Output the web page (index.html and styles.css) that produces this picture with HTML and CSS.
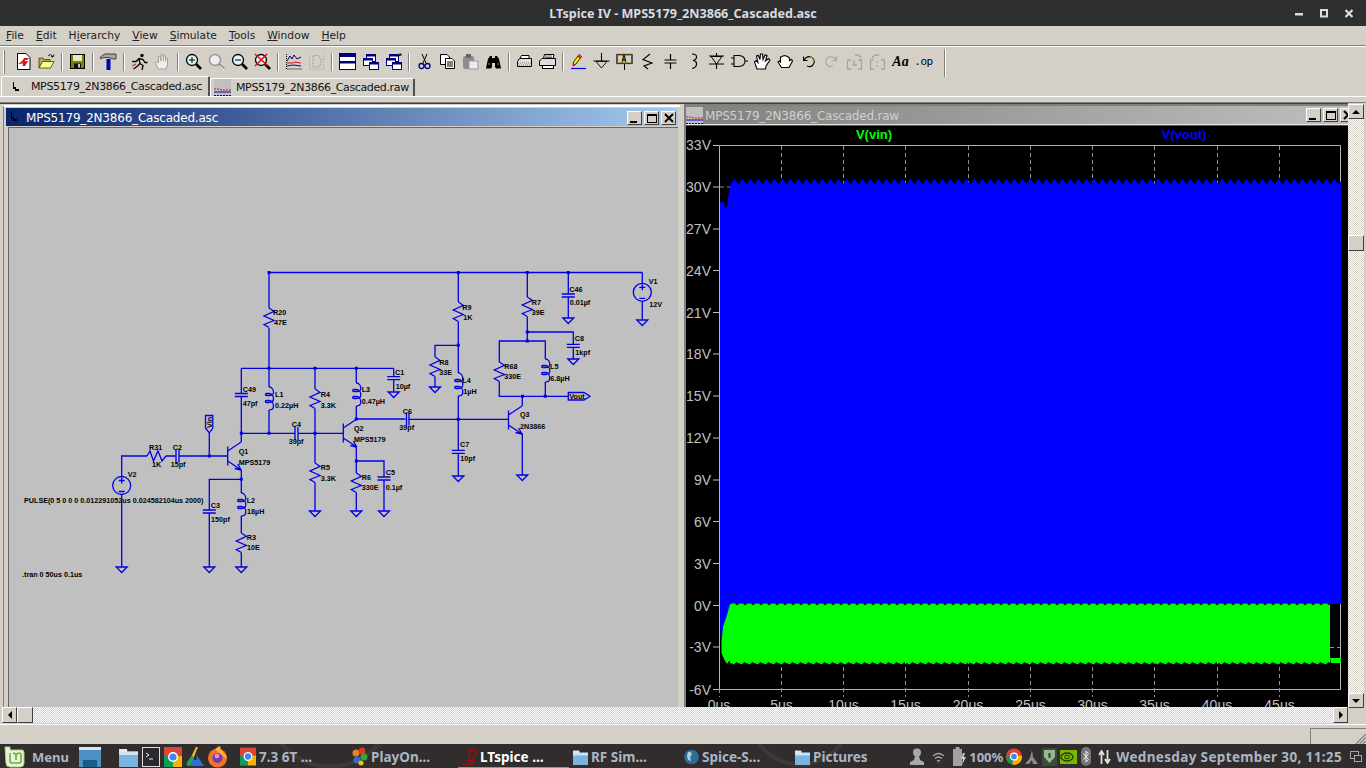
FILE: index.html
```html
<!DOCTYPE html>
<html lang="en">
<head>
<meta charset="utf-8">
<title>LTspice IV</title>
<link rel="stylesheet" href="styles.css">
</head>
<body>
<svg class="defs" width="0" height="0">
<defs>
<symbol id="mag" viewBox="0 0 17 17"><path d="M11 11l5 5" stroke="#000" stroke-width="2.6"/><circle cx="7" cy="7" r="5.5" fill="#dff3f3" stroke="#000" stroke-width="1.3"/></symbol>
<symbol id="magg" viewBox="0 0 17 17"><path d="M11 11l5 5" stroke="#999" stroke-width="2.6"/><circle cx="7" cy="7" r="5.5" fill="#eee" stroke="#999" stroke-width="1.5"/><path d="M12 13l4 4" stroke="#fff"/></symbol>
<symbol id="win2" viewBox="0 0 17 17"><rect x="4.5" y="1.5" width="9" height="7" fill="#fff" stroke="#000080"/><rect x="4.5" y="1.5" width="9" height="2" fill="#000080"/><rect x="1.5" y="5.5" width="9" height="7" fill="#fff" stroke="#000080"/><rect x="1.5" y="5.5" width="9" height="2" fill="#000080"/><rect x="7.5" y="9.5" width="9" height="7" fill="#fff" stroke="#000080"/><rect x="7.5" y="9.5" width="9" height="2" fill="#000080"/></symbol>
<symbol id="q" overflow="visible"><path d="M0-9.5V9.5M0-5L13.5-14M0 5L13.5 14M13.5 14L7 12.5M13.5 14L10 8" fill="none"/></symbol>
<symbol id="gnd" overflow="visible"><path d="M-5.5 0H5.5L0 5.5Z" fill="none"/></symbol>
<symbol id="res" overflow="visible"><path d="M0 0L5 3.3L-5 8L5 12.5L-5 16.5L0 19.5" fill="none"/></symbol>
<symbol id="coil" overflow="visible"><path d="M0 0C3 0 4.5 3 4.5 5.5S3 8.5 0 8.5H-2.5C-4 8.5-4 6.5-2.5 6.5H0C3 6.5 4.5 9 4.5 11.5S3 15.5 0 15.5H-2.5C-4 15.5-4 13.5-2.5 13.5H0C3 13.5 4.5 16.5 4.5 19S3 23 0 23" fill="none"/></symbol>
<symbol id="src" overflow="visible"><circle r="9" fill="none"/><path d="M-3-5H3M0-8V-2M-3 6H3" fill="none"/></symbol>
<symbol id="cap" overflow="visible"><path d="M-6.5 0H6.5M-6.5 3H6.5" fill="none"/></symbol>
<pattern id="tb" width="8" height="9" patternUnits="userSpaceOnUse" x="731" y="178"><path d="M0 6.500L1 4.500L2.500 1.500L3.500 .5L4.500 2.500L5.500 4L7 5L8 6.500V9H0Z" fill="#0000ff"/></pattern>
<pattern id="tg" width="8" height="3" patternUnits="userSpaceOnUse" x="730" y="603"><path d="M0 1.500L2 .5L5 .5L6.500 2L8 1.500V3H0Z" fill="#00ff00"/></pattern>
<pattern id="tgb" width="8" height="5" patternUnits="userSpaceOnUse" x="730" y="661"><path d="M0 0H8V2L6.500 1L3.500 3.500L2 2.500L0 2Z" fill="#00ff00"/></pattern>
</defs>
</svg>

<header class="titlebar">
  <span></span>
  <span class="title-text">LTspice IV - MPS5179_2N3866_Cascaded.asc</span>
  <span class="wm-controls">
    <svg width="8" height="9" viewBox="0 0 8 9"><rect y="4" width="8" height="2.500" fill="#ddd"/></svg>
    <svg width="8" height="9" viewBox="0 0 8 9"><rect x="1" y="1" width="6" height="6.500" fill="none" stroke="#ddd" stroke-width="2"/></svg>
    <svg width="8" height="9" viewBox="0 0 8 9"><path d="M.5 1L7.500 8M7.500 1L.5 8" stroke="#ddd" stroke-width="2.200"/></svg>
  </span>
</header>

<nav class="menubar">
  <span class="mi"><u>F</u>ile</span><span class="mi"><u>E</u>dit</span><span class="mi">H<u>i</u>erarchy</span><span class="mi"><u>V</u>iew</span><span class="mi"><u>S</u>imulate</span><span class="mi"><u>T</u>ools</span><span class="mi"><u>W</u>indow</span><span class="mi"><u>H</u>elp</span>
</nav>

<div class="toolbar">
  <i class="grip"></i>
  <span class="tb"><svg viewBox="0 0 17 17"><path d="M2.500.5H11L15 4.500V16.500H2.500Z" fill="#fff" stroke="#000"/><path d="M3.500 11L8 7L9 5H14L12 7H10L8.500 11H7L8 8.500L6 11Z" fill="#e01010"/><path d="M9 8H13L10 13H7.500Z" fill="#e01010"/></svg></span>
  <span class="tb"><svg viewBox="0 0 17 17"><path d="M1 15V5H5L6 6.500H12V8.500H5L1 15Z" fill="#b8a850" stroke="#404000" stroke-width=".8"/><path d="M1 15L4.500 8.500H16L12.500 15Z" fill="#ffff88" stroke="#404000" stroke-width=".8"/><path d="M10 3Q13 0 15 4M15 4L16 1.500M15 4L13 3.500" fill="none" stroke="#000" stroke-width=".9"/></svg></span>
  <i class="sep"></i>
  <span class="tb"><svg viewBox="0 0 17 17"><rect x="1.500" y="1.500" width="14" height="14" fill="#808000" stroke="#000"/><rect x="4" y="2" width="9" height="6" fill="#e8e8c8"/><rect x="5" y="10.500" width="7" height="5" fill="#111"/><rect x="9" y="11" width="2" height="3.500" fill="#ccc"/></svg></span>
  <i class="sep"></i>
  <span class="tb"><svg viewBox="0 0 17 17"><path d="M0 5Q3 0 9 1H16V6H13.500Q9 4 5 4.500Q2 4.500 1 6Z" fill="#a8a8a8" stroke="#222" stroke-width=".8"/><rect x="6.500" y="6" width="4" height="11" fill="#0000c8"/></svg></span>
  <i class="sep"></i>
  <span class="tb"><svg viewBox="0 0 17 17"><circle cx="11" cy="2.500" r="1.700" fill="#000"/><path d="M1 8.500H5L8 5.500L12 6.500L14 9.500H16.500M8 6L9 10.500L6.500 13L2.500 16M9 10.500L12 12.500L11 17" fill="none" stroke="#000" stroke-width="1.300"/><path d="M5 11L1 13" stroke="#c01010"/></svg></span>
  <span class="tb"><svg viewBox="0 0 17 17"><path d="M4 16L1.500 9.500L3 8.500L4.500 10V3.500L6 3L7 8V1.500L9 1.500L9.500 8V2.500L11.500 3L11.500 8.500V5L13.500 5.500V12L12 16Z" fill="#eee" stroke="#a0a0a0"/></svg></span>
  <i class="sep"></i>
  <span class="tb"><svg viewBox="0 0 17 17"><use href="#mag"/><path d="M4 7H10M7 4V10" stroke="#000"/></svg></span>
  <span class="tb"><svg viewBox="0 0 17 17"><use href="#magg"/></svg></span>
  <span class="tb"><svg viewBox="0 0 17 17"><use href="#mag"/><path d="M4 7H10" stroke="#000"/></svg></span>
  <span class="tb"><svg viewBox="0 0 17 17"><use href="#mag"/><path d="M1 1L14 13M13 1L1 13" stroke="#e01010" stroke-width="1.600"/></svg></span>
  <i class="sep"></i>
  <span class="tb"><svg viewBox="0 0 17 17"><path d="M1.500 1V16H17" fill="none" stroke="#000" stroke-dasharray="1 1"/><path d="M2 8L5 3L7 6L9 2L12 6L16 4" fill="none" stroke="#000080"/><path d="M2 10H8L10 9L16 10" fill="none" stroke="#e01010"/><path d="M2 13L8 12L16 13" fill="none" stroke="#0000d0"/></svg></span>
  <span class="tb"><svg viewBox="0 0 17 17"><path d="M1.500 1V16H17M15.500 1V16" fill="none" stroke="#a8a8a8" stroke-dasharray="1 1"/><path d="M5 2.500H10L13 5.500V11L10 14H5V2.500" fill="none" stroke="#a8a8a8" stroke-dasharray="2 1" stroke-width="1.200"/></svg></span>
  <i class="sep"></i>
  <span class="tb"><svg viewBox="0 0 17 17"><rect x=".5" y=".5" width="16" height="16" fill="#fff" stroke="#000080"/><rect y="1" width="17" height="3" fill="#000080"/><rect y="8" width="17" height="2.500" fill="#000080"/></svg></span>
  <span class="tb"><svg viewBox="0 0 17 17"><use href="#win2"/></svg></span>
  <span class="tb"><svg viewBox="0 0 17 17"><use href="#win2"/><path d="M13 4L16 1M14 1H16V3" fill="none" stroke="#000"/></svg></span>
  <i class="sep"></i>
  <span class="tb"><svg viewBox="0 0 17 17"><path d="M6 1L10 10M11 1L7 10" stroke="#000"/><circle cx="5.500" cy="13" r="2.500" fill="none" stroke="#000080" stroke-width="1.300"/><circle cx="11.500" cy="13" r="2.500" fill="none" stroke="#000080" stroke-width="1.300"/></svg></span>
  <span class="tb"><svg viewBox="0 0 17 17"><path d="M1.500 1.500H8L10.500 4V11.500H1.500Z" fill="#fff" stroke="#000"/><path d="M6.500 5.500H13L15.500 8V15.500H6.500Z" fill="#fff" stroke="#000"/><path d="M8 9H14M8 11H14M8 13H14" stroke="#000"/></svg></span>
  <span class="tb"><svg viewBox="0 0 17 17"><rect x="1" y="3" width="11" height="13" rx="2" fill="#8c8c8c"/><rect x="4" y="1" width="5" height="4" fill="#666"/><rect x="7" y="8" width="9" height="8" fill="#ececec" stroke="#999"/></svg></span>
  <span class="tb"><svg viewBox="0 0 17 17"><path d="M1 15L3 6L5 3H7V14L6 15.500H1ZM16 15L14 6L12 3H10V14L11 15.500H16Z" fill="#000"/><rect x="6.500" y="5" width="4" height="5" fill="#000"/><path d="M3 11H5M12 11H14" stroke="#888"/></svg></span>
  <i class="sep"></i>
  <span class="tb"><svg viewBox="0 0 17 17"><path d="M4 5.500L5.500 2.500H13V5.500" fill="#fff" stroke="#000"/><path d="M1.500 8.500L3.500 5.500H15.500V13.500H1.500Z" fill="#ddd" stroke="#000"/><path d="M2 10H15M3 12H15" stroke="#888" stroke-dasharray="1 1"/></svg></span>
  <span class="tb"><svg viewBox="0 0 17 17"><path d="M4.500 5.500L5.500 1.500H15L14 5.500" fill="#fff" stroke="#000"/><path d="M.5 8L3 5.500H16.500V12.500H.5Z" fill="#ddd" stroke="#000"/><rect x="3.500" y="12.500" width="11" height="3" fill="#fff" stroke="#000"/><path d="M6 3H13M6 4.500H13" stroke="#000" stroke-width=".6"/></svg></span>
  <i class="sep"></i>
  <span class="tb"><svg viewBox="0 0 17 17"><path d="M1 15.500H16" stroke="#0000ff" stroke-width="1.200"/><path d="M3 13L3.500 9L9 1.500L11.500 3.500L6 11Z" fill="#ffe800" stroke="#000" stroke-width=".8"/><path d="M8 3L11 5" stroke="#e01010" stroke-width="1.600"/><path d="M3 13.500L3.500 10L5.500 11.500Z" fill="#e01010"/></svg></span>
  <span class="tb"><svg viewBox="0 0 17 17"><path d="M8.500 0V8M.5 8H16.500" stroke="#000" stroke-width="1.100"/><path d="M3 8.500H14L8.500 15Z" fill="#d4d0c8" stroke="#000" stroke-width=".9"/></svg></span>
  <span class="tb"><svg viewBox="0 0 17 17"><rect x="1" y="1.500" width="15" height="9" fill="#d4d0c8" stroke="#000" stroke-width="1.200"/><path d="M1 2H16M1 10H16" stroke="#808000"/><path d="M8.500 11V17" stroke="#000"/><text x="5.500" y="9" class="ti">A</text></svg></span>
  <span class="tb"><svg viewBox="0 0 17 17"><path d="M11 1L4 6.500L13 10L5 13L9 16" fill="none" stroke="#000" stroke-width="1.100"/></svg></span>
  <span class="tb"><svg viewBox="0 0 17 17"><path d="M8.500 1V7M8.500 10V16M2.500 7H14.500M2.500 10H14.500" stroke="#000" stroke-width="1.200"/></svg></span>
  <span class="tb"><svg viewBox="0 0 17 17"><path d="M7 1Q12 1 11.500 4.500Q11 7 8 7.500Q12 8 11.500 11.500Q11 15 7 15.500" fill="none" stroke="#000" stroke-width="1.200"/></svg></span>
  <span class="tb"><svg viewBox="0 0 17 17"><path d="M8.500 0V16M1 3H16M1 11H16" stroke="#000" stroke-width="1.100"/><path d="M3 3.500H14L8.500 11Z" fill="#d4d0c8" stroke="#000"/></svg></span>
  <span class="tb"><svg viewBox="0 0 17 17"><path d="M3 2.500H8Q14 3 14 8Q14 13 8 13.500H3ZM0 5H3M0 11H3M14 8H17" fill="none" stroke="#000" stroke-width="1.100"/></svg></span>
  <span class="tb"><svg viewBox="0 0 17 17"><path d="M3 16L.5 9L2 7.500L4 9.500L2.500 3L4.500 2.500L6 6.500L6.500 1L8.500 1L9 6.500L11 2L13 2.500L11.500 8L14.500 5.500L16 7L12 13L11.500 16Z" fill="#fff" stroke="#000" stroke-width="1.100"/></svg></span>
  <span class="tb"><svg viewBox="0 0 17 17"><path d="M4.500 14.500L1 9L2.500 8L3.500 9V4L5 3.500L6 3L7.500 2.500L9 3L10.500 3.500L12.500 5V7.500L14.500 6.500L15.500 8L12 14.500Z" fill="#fff" stroke="#000" stroke-width="1.100"/></svg></span>
  <span class="tb"><svg viewBox="0 0 17 17"><path d="M3.500 3.500V7.500H7.500M4 7Q7 2.500 11 4Q15 6 14 10Q12 15 7 13" fill="none" stroke="#000" stroke-width="1.100"/><path d="M10 3.500Q13 4.500 14 8" fill="none" stroke="#c09020"/></svg></span>
  <span class="tb"><svg viewBox="0 0 17 17"><path d="M13.500 3.500V7.500H9.500M13 7Q10 2.500 6 4Q2 6 3 10Q5 15 10 13" fill="none" stroke="#aaa" stroke-width="1.300"/></svg></span>
  <span class="tb"><svg viewBox="0 0 17 17"><path d="M1.500 7H5M1.500 7V16H5M12 7H15.500V16H12M8 7V12M8 12H11M6 12H7M9 2Q13 1 15 5" fill="none" stroke="#a4a4a4" stroke-width="1.300"/></svg></span>
  <span class="tb"><svg viewBox="0 0 17 17"><path d="M1.500 7H5M1.500 7V16H5M12 7H15.500V16H12M8 8V10M8 12V14M3 5Q5 1 10 2" fill="none" stroke="#a4a4a4" stroke-width="1.300"/></svg></span>
  <span class="tb tb-text"><span class="aa">Aa</span></span>
  <span class="tb tb-text"><span class="op">.op</span></span>
  <i class="sep sep-last"></i>
</div>

<div class="tabs">
  <div class="tab tab-on"><svg width="8" height="10" viewBox="0 0 8 10"><path d="M1 0V7H3V9H7V7H4V5H2V0Z" fill="#000"/></svg><span>MPS5179_2N3866_Cascaded.asc</span></div>
  <div class="tab tab-off"><svg width="17" height="17" viewBox="0 0 17 17"><rect width="17" height="17" fill="#c0c0c0"/><path d="M0 16.500H17" stroke="#0000c0" stroke-dasharray="2 1"/><path d="M0 10H4L8 11H17" stroke="#e01010" fill="none" stroke-dasharray="2 1"/><path d="M0 13H17" stroke="#0000c0"/></svg><span>MPS5179_2N3866_Cascaded.raw</span></div>
</div>
<div class="tabline"></div>

<main class="work">
  <div class="mdi">
    <section class="win win-a">
      <div class="cap cap-a">
        <svg width="8" height="10" viewBox="0 0 8 10"><path d="M1 0V7H3V9H7V7H4V5H2V0Z" fill="#000"/></svg>
        <span class="cap-text">MPS5179_2N3866_Cascaded.asc</span>
        <span class="btns"><b class="wb"><i class="g-min"></i></b><b class="wb"><i class="g-max"></i></b><b class="wb wb-x"><svg width="10" height="10" viewBox="0 0 10 10"><path d="M1 1L9 9M9 1L1 9" stroke="#000" stroke-width="2"/></svg></b></span>
      </div>
      <svg class="schem" viewBox="8 127 670 580" width="670" height="580">
        <g class="w">
          <path d="M269 272.500H642.300M269 272.500V308M269 328V368.300M241.300 368.300H393.500"/>
          <path d="M241.300 368.300V393.500M241.300 396.500V433.300M241.300 433.300H294.800M298 433.300H344M269 368.300V387M269 410V433.300"/>
          <path d="M315 368.300V389M315 408.500V433.300M315 433.300V463M315 482.500V511M356.300 368.300V383M356.300 406V419"/>
          <path d="M356.300 419H405.500M408.500 419.300H508M356.300 447V461H384V477M384 480V511M356.300 461V473M356.300 492.500V511M393.700 368.300V376.700M393.700 379.700V392"/>
          <path d="M121.700 476V456H147M121.700 494.500V567M166 456H175.800M179 456H227.500M209.300 456V433M241.300 433.300V442M241.300 470V479.300H209.300V510M209.300 513V567M241.300 479.300V493M241.300 516V533M241.300 552.500V567"/>
          <path d="M147 456L150 451L153.500 461L158 451L162 461L166 456" />
          <path d="M176 449.500V462.500M179 449.500V462.500M295 427V440M298 427V440M406.500 412.500V425.500M409 412.500V425.500"/>
          <path d="M458.300 272.500V302M458.300 321.500V373M458.300 396V450.300M458.300 453.300V476M435 387V376.500M435 357V345.300H458.300"/>
          <path d="M527.300 272.500V297M527.300 316.500V341H499.300V362M499.300 381.500V396.300H568M527.300 332H573.300V344.300M573.300 347.300V359M527.300 341H545.300V359M545.300 382V396.300M568.300 272.500V294M568.300 297V318M642.300 272.500V283M642.300 301.500V320"/>
          <path d="M522.300 396.300V406M522.300 433V475"/>
          <path d="M568.300 392.500H584L590 396.300L584 400H568.300ZM205.500 415.500V428L209.300 433L212.800 428V415.500Z"/>
          <use href="#q" x="227.700" y="456"/><use href="#q" x="343.300" y="433"/><use href="#q" x="508.500" y="420"/>
          <use href="#gnd" x="121.700" y="567"/><use href="#gnd" x="209.300" y="567"/><use href="#gnd" x="241.300" y="567"/><use href="#gnd" x="315" y="511"/><use href="#gnd" x="356.300" y="511"/><use href="#gnd" x="384" y="511"/><use href="#gnd" x="393.700" y="392"/><use href="#gnd" x="435" y="387"/><use href="#gnd" x="458.300" y="476"/><use href="#gnd" x="522.300" y="475"/><use href="#gnd" x="568.300" y="318"/><use href="#gnd" x="573.300" y="359"/><use href="#gnd" x="642.300" y="320"/>
          <use href="#res" x="269" y="308"/><use href="#res" x="315" y="389"/><use href="#res" x="315" y="463"/><use href="#res" x="356.300" y="473"/><use href="#res" x="241.300" y="533"/><use href="#res" x="458.300" y="302"/><use href="#res" x="435" y="357"/><use href="#res" x="527.300" y="297"/><use href="#res" x="499.300" y="362"/>
          <use href="#coil" x="269" y="387"/><use href="#coil" x="356.300" y="383"/><use href="#coil" x="241.300" y="493"/><use href="#coil" x="458.300" y="373"/><use href="#coil" x="545.300" y="359"/>
          <use href="#src" x="121.700" y="485.500"/><use href="#src" x="642.300" y="292.300"/>
          <use href="#cap" x="241.300" y="393.500"/><use href="#cap" x="209.300" y="510"/><use href="#cap" x="384" y="477"/><use href="#cap" x="393.700" y="376.700"/><use href="#cap" x="458.300" y="450.300"/><use href="#cap" x="568.300" y="294"/><use href="#cap" x="573.300" y="344.300"/>
        </g>
        <path class="nodes" d="M269 272.500h0M458.300 272.500h0M527.300 272.500h0M568.300 272.500h0M269 368.300h0M315 368.300h0M356.300 368.300h0M241.300 433.300h0M269 433.300h0M315 433.300h0M356.300 419h0M458.300 419.300h0M356.300 461h0M209.300 456h0M241.300 479.300h0M458.300 345.300h0M527.300 332h0M527.300 341h0M522.500 396.300h0M545.300 396.300h0"/>
        <g class="lb">
          <text x="273" y="315">R20</text><text x="274" y="325">47E</text>
          <text x="242.700" y="392">C49</text><text x="242.700" y="406">47pf</text>
          <text x="275" y="397">L1</text><text x="275" y="408">0.22µH</text>
          <text x="320.700" y="397">R4</text><text x="320.700" y="407.500">3.3K</text>
          <text x="361.700" y="392">L3</text><text x="361.700" y="404">0.47µH</text>
          <text x="291.700" y="427">C4</text><text x="288.700" y="444">39pf</text>
          <text x="354" y="431">Q2</text><text x="354" y="442">MPS5179</text>
          <text x="238.700" y="454">Q1</text><text x="238.700" y="465">MPS5179</text>
          <text x="149" y="450">R31</text><text x="152" y="467">1K</text>
          <text x="172.700" y="450">C2</text><text x="170.700" y="467">15pf</text>
          <text x="127.700" y="477">V2</text>
          <text x="246.700" y="503">L2</text><text x="247" y="514">18µH</text>
          <text x="210.700" y="507.500">C3</text><text x="211" y="521.500">150pf</text>
          <text x="246.700" y="540">R3</text><text x="247" y="550">10E</text>
          <text x="320.700" y="470">R5</text><text x="320.700" y="481">3.3K</text>
          <text x="361.700" y="480">R6</text><text x="361.700" y="490">330E</text>
          <text x="385.700" y="475">C5</text><text x="385.700" y="489.500">0.1µf</text>
          <text x="395" y="374.500">C1</text><text x="395.700" y="388.500">10µf</text>
          <text x="402.700" y="413.500">C6</text><text x="399.300" y="430">39pf</text>
          <text x="462.300" y="383">L4</text><text x="463.300" y="394">1µH</text>
          <text x="460" y="447">C7</text><text x="460.300" y="461">10pf</text>
          <text x="462.300" y="309.500">R9</text><text x="463.300" y="320">1K</text>
          <text x="439.300" y="365">R8</text><text x="439.300" y="375">33E</text>
          <text x="531.700" y="305">R7</text><text x="531.700" y="315">39E</text>
          <text x="569.300" y="291.500">C46</text><text x="569.700" y="305">0.01µf</text>
          <text x="574.700" y="341">C8</text><text x="575.300" y="355">1kpf</text>
          <text x="504.300" y="369">R68</text><text x="504.300" y="379">330E</text>
          <text x="550" y="369">L5</text><text x="550.300" y="381">6.8µH</text>
          <text x="520" y="417">Q3</text><text x="520" y="428.500">2N3866</text>
          <text x="648.700" y="284">V1</text><text x="649.300" y="307">12V</text>
          <text x="569.300" y="399">Vout</text>
          <text x="211.500" y="428" transform="rotate(-90 211.500 428)">Vin</text>
          <text x="24" y="503">PULSE(0 5 0 0 0 0.012291052us 0.024582104us 2000)</text>
          <text x="22" y="577">.tran 0 50us 0.1us</text>
        </g>
      </svg>
    </section>
    <section class="win win-b">
      <div class="cap cap-b">
        <svg width="17" height="17" viewBox="0 0 17 17"><rect width="17" height="17" fill="#c0c0c0"/><path d="M0 16.500H17" stroke="#0000c0" stroke-dasharray="2 1"/><path d="M0 10H4L8 11H17" stroke="#e01010" fill="none" stroke-dasharray="2 1"/><path d="M0 13H17" stroke="#0000c0"/></svg>
        <span class="cap-text cap-dim">MPS5179_2N3866_Cascaded.raw</span>
        <span class="btns"><b class="wb"><i class="g-min"></i></b><b class="wb"><i class="g-max"></i></b><b class="wb wb-x"><svg width="10" height="10" viewBox="0 0 10 10"><path d="M1 1L9 9M9 1L1 9" stroke="#000" stroke-width="2"/></svg></b></span>
      </div>
      <svg class="plot" viewBox="686 126 680 581" width="680" height="581">
        <rect x="686" y="126" width="680" height="581" fill="#000"/>
        <path class="frame" d="M719.500 145.500H1340.500V689.500H719.500Z"/>
        <path class="ticks" d="M713 145.500h6M713 187h6M713 229h6M713 270.500h6M713 312.500h6M713 354h6M713 396h6M713 438h6M713 480h6M713 521.500h6M713 563.500h6M713 605.500h6M713 647h6M713 689.500h6"/>
        <path class="grid" d="M781.500 146V184M843.500 146V184M905.500 146V184M968.500 146V184M1030.500 146V184M1092.500 146V184M1154.500 146V184M1217.500 146V184M1279.500 146V184M781.500 660V697M843.500 660V697M905.500 660V697M968.500 660V697M1030.500 660V697M1092.500 660V697M1154.500 660V697M1217.500 660V697M1279.500 660V697M719.500 689V697M1330 647.500H1340M720 187H731"/>
        <rect x="731" y="178" width="610" height="9" fill="url(#tb)"/>
        <path d="M720 202H724L725.500 209L727 206L729 192L731 181V187H1341V604H730V643H721L720 623Z" fill="#0000ff"/>
        <path d="M721.500 653V643L723 627L727 615L730 604V661H729L727 664L724 659Z" fill="#00ff00"/>
        <rect x="730" y="606" width="600" height="55" fill="#00ff00"/>
        <rect x="730" y="603" width="600" height="3" fill="url(#tg)"/>
        <rect x="730" y="661" width="600" height="5" fill="url(#tgb)"/>
        <path d="M1330 658H1341V663H1331Z" fill="#00ff00"/>
        <g class="ax">
          <text x="711" y="150">33V</text><text x="711" y="192">30V</text><text x="711" y="234">27V</text><text x="711" y="275.500">24V</text><text x="711" y="317.500">21V</text><text x="711" y="359">18V</text><text x="711" y="401">15V</text><text x="711" y="443">12V</text><text x="711" y="485">9V</text><text x="711" y="526.500">6V</text><text x="711" y="568.500">3V</text><text x="711" y="610.500">0V</text><text x="711" y="652">-3V</text><text x="711" y="694.500">-6V</text>
        </g>
        <g class="ax ax-x">
          <text x="719" y="710">0us</text><text x="781.500" y="710">5us</text><text x="843.500" y="710">10us</text><text x="905.500" y="710">15us</text><text x="968" y="710">20us</text><text x="1030.500" y="710">25us</text><text x="1092.500" y="710">30us</text><text x="1154.500" y="710">35us</text><text x="1217" y="710">40us</text><text x="1279.500" y="710">45us</text>
        </g>
        <text class="leg leg-g" x="874" y="139">V(vin)</text>
        <text class="leg leg-b" x="1184" y="139">V(vout)</text>
      </svg>
    </section>
  </div>
  <aside class="vscroll">
    <span class="sb"><i class="ar ar-up"></i></span>
    <span class="track track-1"></span>
    <span class="sb thumb"></span>
    <span class="track"></span>
    <span class="sb"><i class="ar ar-dn"></i></span>
  </aside>
</main>

<div class="hscroll">
  <span class="sb"><i class="ar ar-lt"></i></span>
  <span class="sb thumb-h"></span>
  <span class="track"></span>
  <span class="sb"><i class="ar ar-rt"></i></span>
  <span class="corner"></span>
</div>

<footer class="status">
  <span class="panel"><svg width="13" height="13" viewBox="0 0 13 13"><path d="M3 13L13 3M6.500 13L13 6.500M10 13L13 10" stroke="#808080" stroke-width="1.200"/></svg></span>
</footer>

<div class="taskbar">
  <span class="t-menu">
    <svg width="21" height="22" viewBox="0 0 21 22"><path d="M1 1H6V4H18Q20 4 20 7V17Q20 21 16 21H6Q2 21 2 17Z" fill="#e8f4dc" stroke="#a8d080"/><path d="M6 7V15Q6 17 8 17H15Q17 17 17 15V9Q17 7 15 7Q13 7 12 9Q11 7 9 7M12 9V14" fill="none" stroke="#70b040" stroke-width="1.700"/></svg>
    <span>Menu</span>
  </span>
  <span class="launcher l-first"><svg width="22" height="22" viewBox="0 0 22 22"><rect y="1" width="22" height="20" fill="#4c90c4"/><rect y="1" width="22" height="3" fill="#d8e4ee"/><rect x="4" y="14" width="14" height="7" fill="#1c5a88"/></svg></span>
  <span class="launcher l-folder"><svg width="19" height="20" viewBox="0 0 19 20"><path d="M0 2H7L9 4H19V20H0Z" fill="#78b4dc"/><rect y="2" width="8" height="3" fill="#dfe8ee"/><rect y="5" width="19" height="3" fill="#cfe4f2"/></svg></span>
  <span class="launcher"><svg width="18" height="20" viewBox="0 0 18 20"><rect x=".5" y=".5" width="17" height="19" fill="#2a2a2e" stroke="#dcdcdc"/><path d="M4 6L7 8L4 10M7 12H11" stroke="#eee" fill="none"/></svg></span>
  <span class="launcher"><svg width="18" height="20" viewBox="0 0 18 20"><rect width="18" height="20" fill="#db4437"/><rect y="9" x="0" width="9" height="11" fill="#0f9d58"/><rect x="9" y="9" width="9" height="11" fill="#f4b400"/><circle cx="9" cy="10" r="5" fill="#fff"/><circle cx="9" cy="10" r="3.600" fill="#4285f4"/></svg></span>
  <span class="launcher"><svg width="18" height="20" viewBox="0 0 18 20"><path d="M6 8L10 0H12L7 12Z" fill="#f4c020"/><path d="M0 17L6 8L8 13L4 19H2Z" fill="#1fa463"/><path d="M10 7L18 19H4L8 13H11Z" fill="#2a6fe0"/></svg></span>
  <span class="launcher"><svg width="19" height="22" viewBox="0 0 19 22"><circle cx="9.500" cy="12" r="9.500" fill="#f2742c"/><path d="M7 3Q11 0 12 0Q12 3 15 6Q19 10 19 13L12 8Z" fill="#ffb028"/><circle cx="9.500" cy="12" r="5" fill="#6a3fb0"/><circle cx="9" cy="10" r="2.400" fill="#e88ad0"/></svg></span>
  <span class="winlist">
    <span class="ti-b"><svg width="16" height="19" viewBox="0 0 18 20"><rect width="18" height="20" fill="#db4437"/><rect y="9" width="9" height="11" fill="#0f9d58"/><rect x="9" y="9" width="9" height="11" fill="#f4b400"/><circle cx="9" cy="10" r="5" fill="#fff"/><circle cx="9" cy="10" r="3.600" fill="#4285f4"/></svg><span>7.3 6T ...</span></span>
    <span class="ti-b"><svg width="17" height="19" viewBox="0 0 17 19"><circle cx="5" cy="6" r="3.500" fill="#e8801c"/><circle cx="11" cy="4" r="3.500" fill="#d83820"/><circle cx="13" cy="10" r="3.500" fill="#3ea040"/><circle cx="6" cy="13" r="3.500" fill="#3868c8"/><circle cx="10" cy="16" r="2.500" fill="#e8c020"/></svg><span>PlayOn...</span></span>
    <span class="ti-b ti-on"><svg width="15" height="16" viewBox="0 0 15 16"><path d="M5 1H9L6 11H11L15 1H9M11 1H15M0 15H11L12 12H6" fill="none" stroke="#901010" stroke-width="1.800"/></svg><span>LTspice ...</span></span>
    <span class="ti-b"><svg width="15" height="18" viewBox="0 0 19 20"><path d="M0 2H7L9 4H19V20H0Z" fill="#78b4dc"/><rect y="2" width="8" height="3" fill="#dfe8ee"/><rect y="5" width="19" height="3" fill="#cfe4f2"/></svg><span>RF Sim...</span></span>
    <span class="ti-b"><svg width="15" height="18" viewBox="0 0 15 18"><circle cx="7.500" cy="9" r="7.300" fill="#2e6f96"/><path d="M4 4Q7 3 8 6L6 9L7 13L4 12L3 8Z" fill="#a8d0e0"/></svg><span>Spice-S...</span></span>
    <span class="ti-b"><svg width="15" height="18" viewBox="0 0 19 20"><path d="M0 2H7L9 4H19V20H0Z" fill="#78b4dc"/><rect y="2" width="8" height="3" fill="#dfe8ee"/><rect y="5" width="19" height="3" fill="#cfe4f2"/></svg><span>Pictures</span></span>
  </span>
  <span class="tray">
    <svg class="t-user" width="14" height="17" viewBox="0 0 14 17"><circle cx="7" cy="4.500" r="4" fill="#a8a8a8"/><path d="M5 8H9L10 12L14 14V17H0V14L4 12Z" fill="#a8a8a8"/></svg>
    <svg class="t-wifi" width="13" height="14" viewBox="0 0 13 14"><path d="M1 6Q6.500 1 12 6M3 8.500Q6.500 5.500 10 8.500M5 11Q6.500 10 8 11M6.500 13V12.500" fill="none" stroke="#a8a8a8" stroke-width="1.300"/></svg>
    <svg class="t-bat" width="13" height="19" viewBox="0 0 13 19"><rect x="0" y="2" width="9" height="17" fill="#a0a0a0"/><rect x="2.500" width="4" height="2" fill="#a0a0a0"/><path d="M10 6L8 12H10L9 18L13 10H10.500L12 6Z" fill="#ccc"/></svg>
    <span class="t-pct">100%</span>
    <svg class="t-chr" width="16" height="19" viewBox="0 0 18 20"><circle cx="9" cy="10" r="9" fill="#db4437"/><path d="M9 10L0 10A9 9 0 0 0 7 19Z" fill="#0f9d58"/><path d="M9 10L7 19A9 9 0 0 0 18 9Z" fill="#f4b400"/><circle cx="9" cy="10" r="4.500" fill="#fff"/><circle cx="9" cy="10" r="3.200" fill="#4285f4"/></svg>
    <svg class="t-g" width="13" height="14" viewBox="0 0 13 14"><path d="M7 0L8 7L13 14H8L7 10L4 14H0L5 8Z" fill="#8c8c8c"/></svg>
    <svg class="t-sh" width="15" height="18" viewBox="0 0 15 18"><rect width="15" height="18" fill="#3c4a3c"/><path d="M2 2H13V9L7.500 15L2 9Z" fill="#98b890"/><path d="M7.500 5V10" stroke="#304030" stroke-width="2"/></svg>
    <svg class="t-nv" width="17" height="14" viewBox="0 0 17 14"><rect width="17" height="14" fill="#76b900"/><ellipse cx="7" cy="7" rx="6" ry="4" fill="none" stroke="#26300a" stroke-width="1.300"/><ellipse cx="7" cy="7" rx="2.500" ry="1.800" fill="none" stroke="#26300a"/></svg>
    <svg class="t-bt" width="10" height="19" viewBox="0 0 10 19"><rect width="10" height="19" rx="5" fill="#777"/><path d="M2.500 6.500L7.500 12.500L5 15V4L7.500 6.500L2.500 12.500" fill="none" stroke="#eee"/></svg>
    <svg class="t-ar" width="13" height="14" viewBox="0 0 13 14"><path d="M3.500 14V2M1 5L3.500 1L6 5M9.500 0V12M7 9L9.500 13L12 9" fill="none" stroke="#ddd" stroke-width="1.800"/></svg>
    <span class="t-date">Wednesday September 30, 11:25</span>
    <svg class="t-win" width="12" height="11" viewBox="0 0 12 11"><rect x=".5" y=".5" width="8" height="7" fill="none" stroke="#a8a8a8"/><rect x="4.500" y="4.500" width="7" height="6" fill="#302c2c" stroke="#a8a8a8"/></svg>
  </span>
</div>
</body>
</html>
```
FILE: styles.css
```css
* { box-sizing: border-box; }
html, body { margin: 0; height: 100%; }
body {
  width: 1366px; height: 768px; overflow: hidden;
  display: flex; flex-direction: column;
  background: #d4d0c8;
  font-family: "DejaVu Sans", sans-serif;
  color: #111;
}
.defs { position: absolute; }

.titlebar {
  flex: none; height: 26px; background: #2f2f2f;
  display: grid; grid-template-columns: 1fr auto 1fr; align-items: center;
}
.title-text { font: bold 12.600px "Noto Sans", sans-serif; color: #d6dce4; }
.wm-controls { display: flex; justify-content: flex-end; gap: 17px; padding-right: 13px; }

.menubar {
  flex: none; height: 20px; padding-left: 0;
  display: flex; align-items: center;
  border-bottom: 1px solid #808080;
  font-size: 10.700px; color: #222;
}
.mi { padding: 0 6px; }

.toolbar {
  flex: none; height: 30px; border-top: 1px solid #fff; padding-left: 3px;
  display: flex; align-items: center;
}
.grip { width: 2px; height: 24px; background: #fff; border-right: 1px solid #808080; margin-right: 7px; flex: none; }
.tb { width: 23px; height: 24px; flex: none; display: flex; align-items: center; justify-content: center; }
.tb svg { width: 17px; height: 17px; display: block; overflow: visible; }
.tb-text { font-family: "Liberation Serif", serif; }
.aa { font: italic bold 14px "Liberation Serif", serif; color: #000; }
.op { font: 11px "DejaVu Sans Mono", monospace; letter-spacing: -.5px; color: #000; }
.ti { font: bold 8px "DejaVu Sans Mono", monospace; fill: #000; }
.sep { flex: none; width: 8px; height: 24px; }
.sep::before { content: ""; display: block; width: 1px; height: 18px; margin: 3px 0 0 3px; background: #808080; box-shadow: 1px 0 #fff; }
.sep-last { margin-left: 6px; }
.sep-last::before { height: 28px; margin-top: -1px; }

.tabs { flex: none; height: 20px; display: flex; align-items: flex-end; padding-left: 1px; font-size: 11px; }
.tab {
  display: flex; align-items: center;
  background: #d4d0c8; border-top: 1px solid #fff; border-left: 1px solid #fff;
  border-right: 2px solid #505050; border-radius: 2px 2px 0 0;
  letter-spacing: -.37px;
}
.tab-on { width: 209px; height: 20px; padding-left: 10px; gap: 11px; }
.tab-off { width: 205px; height: 18px; padding-left: 3px; gap: 5px; }
.tabline { flex: none; height: 6px; border-top: 1px solid #fff; }

.work { flex: none; height: 605px; display: flex; border-top: 1px solid #808080; }
.mdi {
  flex: none; width: 1348px; height: 604px; overflow: hidden;
  display: flex; align-items: flex-start; gap: 4px; padding-left: 3px;
  border-top: 1px solid #404040;
  background: #d4d0c8;
}
.win { flex: none; background: #d4d0c8; overflow: hidden; }
.win-a { width: 677px; height: 660px; margin-top: 1px; border-top: 2px solid #fff; border-left: 1px solid #808080; padding-left: 2px; }
.win-b { width: 684px; height: 660px; border-top: 2px solid #808080; border-left: 2px solid #808080; }
.cap { height: 18px; display: flex; align-items: center; }
.cap-a { margin: 1px 2px 0 0; background: linear-gradient(90deg, #0a246a, #a6caf0); color: #fff; padding-left: 4px; gap: 8px; font-size: 12px; }
.cap-a .btns { margin-top: 2px; padding-right: 2px; }
.cap-b { background: linear-gradient(90deg, #808080, #c0c0c0); font-size: 12px; gap: 2px; margin-bottom: 2px; box-shadow: 0 1px 0 #e8e8e8, 0 2px 0 #555; }
.cap-dim { color: #d4d0c8; }
.cap-text { flex: none; letter-spacing: -.2px; padding-top: 2px; }
.btns { margin-left: auto; display: flex; gap: 2px; }
.cap-b .btns { padding-right: 13px; }
.wb {
  width: 15px; height: 14px; background: #d4d0c8;
  border-top: 1px solid #fff; border-left: 1px solid #fff; border-right: 1px solid #404040; border-bottom: 1px solid #404040;
  display: flex; align-items: center; justify-content: center;
}
.g-min { width: 7px; height: 2px; background: #000; align-self: flex-end; margin-bottom: 1px; margin-right: 3px; }
.g-max { width: 10px; height: 9px; border: 1px solid #000; border-top-width: 2px; }
.schem { display: block; background: #c0c0c0; margin: 1px 0 0 2px; box-shadow: inset 1px 1px 0 #666; }
.plot { display: block; }

.w { stroke: #0000e6; stroke-width: 1.300; fill: none; }
.nodes { stroke: #0000e6; stroke-width: 3; stroke-linecap: square; fill: none; }
.lb { font: bold 7.200px "Liberation Sans", sans-serif; fill: #000; }

.frame { fill: none; stroke: #b4b4b4; }
.ticks { stroke: #c0c0c0; fill: none; }
.grid { stroke: #909090; stroke-dasharray: 4 3; fill: none; }
.ax { font: 14px "Liberation Sans", sans-serif; fill: #c0c0c0; text-anchor: end; }
.ax-x { text-anchor: middle; }
.leg { font: bold 13px "Liberation Sans", sans-serif; text-anchor: middle; }
.leg-g { fill: #00ff00; }
.leg-b { fill: #0000ff; }

.vscroll { flex: none; width: 16px; height: 604px; margin-top: 1px; display: flex; flex-direction: column; }
.track { flex: 1; background: repeating-conic-gradient(#d4d0c8 0 25%, #fff 0 50%) 0 0 / 2px 2px; }
.track-1 { flex: none; height: 116px; }
.sb {
  flex: none; display: flex; align-items: center; justify-content: center;
  background: #d4d0c8; border-top: 1px solid #fff; border-left: 1px solid #fff;
  border-right: 1px solid #404040; border-bottom: 1px solid #404040;
}
.vscroll .sb { height: 15px; }
.vscroll .thumb { height: 16px; }
.hscroll { flex: none; height: 16px; display: flex; padding-left: 2px; }
.hscroll .sb { width: 15px; }
.hscroll .thumb-h { width: 16px; }
.corner { flex: none; width: 18px; }
.ar { width: 0; height: 0; border: 4px solid transparent; display: block; }
.ar-up { border-bottom-color: #000; border-top-width: 0; }
.ar-dn { border-top-color: #000; border-bottom-width: 0; }
.ar-lt { border-right-color: #000; border-left-width: 0; }
.ar-rt { border-left-color: #000; border-right-width: 0; }

.status {
  flex: none; height: 20px; margin-top: 1px; border-top: 1px solid #fff;
  display: flex; justify-content: flex-end; align-items: flex-end;
}
.panel { width: 56px; height: 16px; border-top: 1px solid #808080; border-left: 1px solid #808080; display: flex; justify-content: flex-end; align-items: flex-end; }
.panel svg { display: block; }

.taskbar {
  flex: none; height: 25px; display: flex; align-items: center;
  background-color: #322d2d;
  background-image:
    radial-gradient(circle at 60px 790px, transparent 40px, #423e3e 41px 44px, transparent 45px),
    radial-gradient(circle at 330px -40px, transparent 60px, #3d3939 61px 64px, transparent 65px),
    radial-gradient(circle at 800px -30px, transparent 48px, #3d3939 49px 52px, transparent 53px);
  font: bold 13.500px "Noto Sans", sans-serif; color: #aab6c4;
}
.taskbar svg { display: block; flex: none; }
.t-menu { display: flex; align-items: center; gap: 7px; padding-left: 4px; width: 79px; font-size: 13px; }
.launcher { display: flex; align-items: center; justify-content: center; flex: none; }
.l-first { margin-right: 18px; }
.l-folder { margin-right: 4px; }
.launcher + .launcher:not(.l-folder) { margin-right: 4px; }
.winlist { display: flex; margin-left: 5px; align-self: stretch; }
.ti-b { width: 111px; display: flex; align-items: center; gap: 3px; padding-left: 4px; }
.ti-on { color: #fff; box-shadow: inset 0 -2px 0 #8ca070; }
.ti-b:last-child { width: 106px; }
.tray { display: flex; align-items: center; margin-left: auto; }
.t-user { margin-right: 8px; }
.t-wifi { margin-right: 8px; }
.t-bat { margin-right: 3px; }
.t-pct { font-size: 13px; }
.t-chr { margin: 0 3px; }
.t-g { margin-right: 4px; }
.t-sh { margin-right: 3px; }
.t-nv { margin-right: 4px; }
.t-bt { margin-right: 7px; }
.t-ar { margin-right: 5px; }
.t-date { margin-right: 8px; letter-spacing: .35px; }
.t-win { margin-right: 4px; }
```
